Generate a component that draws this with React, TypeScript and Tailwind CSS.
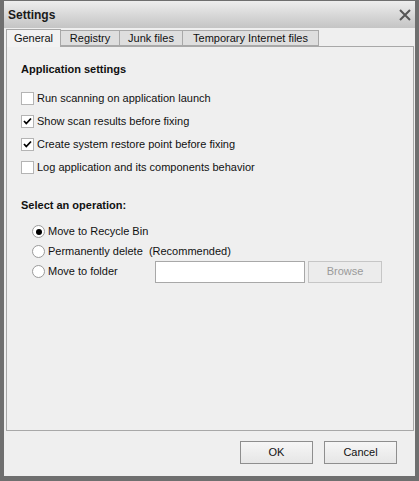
import React from "react";

const font = { fontFamily: '"Liberation Sans", Arial, sans-serif' };

function Check({ checked }: { checked?: boolean }) {
  return (
    <span className="w-[13px] h-[13px] border border-[#b4b4b4] bg-white flex items-center justify-center shrink-0">
      {checked && (
        <svg width="9" height="9" viewBox="0 0 9 9">
          <path d="M1 4 L3.3 6.5 L8 1.5" stroke="#000" strokeWidth="1.8" fill="none" />
        </svg>
      )}
    </span>
  );
}

function Radio({ checked }: { checked?: boolean }) {
  return (
    <span className="w-[13px] h-[13px] rounded-full border border-[#9a9a9a] bg-white flex items-center justify-center shrink-0">
      {checked && <span className="w-[6px] h-[6px] rounded-full bg-black" />}
    </span>
  );
}

export default function App() {
  return (
    <div
      className="w-[419px] h-[481px] bg-[#efefef] flex flex-col border-l-[4px] border-r-[4px] border-b-[5px] border-t border-[#6f6f6f] text-[11px] text-[#111]"
      style={font}
    >
      {/* Title bar */}
      <div className="h-[27px] flex items-center justify-between pl-[4px] pr-[3px] bg-gradient-to-b from-[#eeeeee] to-[#c4c4c4]">
        <span className="font-bold text-[12px] text-[#1a1a1a]">Settings</span>
        <svg width="14" height="14" viewBox="0 0 14 14">
          <path d="M2 2 L12 12 M12 2 L2 12" stroke="#555" strokeWidth="2" />
        </svg>
      </div>

      {/* Tabs */}
      <div className="flex items-end h-[18px] pl-[2px]">
        <div className="w-[55px] h-[18px] flex items-center justify-center bg-[#f2f2f2] border border-b-0 border-[#a8a8a8] relative z-10 -mb-px pb-px">
          General
        </div>
        <div className="w-[59px] h-[16px] flex items-center justify-center bg-[#dedede] border border-l-0 border-[#a8a8a8]">Registry</div>
        <div className="w-[63px] h-[16px] flex items-center justify-center bg-[#dedede] border border-l-0 border-[#a8a8a8]">Junk files</div>
        <div className="w-[136px] h-[16px] flex items-center justify-center bg-[#dedede] border border-l-0 border-[#a8a8a8]">Temporary Internet files</div>
      </div>

      {/* Panel */}
      <div className="ml-[2px] mr-[1px] h-[385px] border border-[#a8a8a8] bg-[#efefef] pl-[14px] pt-[15px]">
        <div className="font-bold h-[14px] leading-[14px]">Application settings</div>
        <div className="mt-[16px] flex flex-col gap-[10px]">
          {[
            ["Run scanning on application launch", false],
            ["Show scan results before fixing", true],
            ["Create system restore point before fixing", true],
            ["Log application and its components behavior", false],
          ].map(([t, c]) => (
            <div key={t as string} className="flex items-center gap-[3px] h-[13px]">
              <Check checked={c as boolean} />
              <span>{t as string}</span>
            </div>
          ))}
        </div>
        <div className="font-bold mt-[24px] h-[14px] leading-[14px]">Select an operation:</div>
        <div className="mt-[13px] ml-[11px] flex flex-col gap-[7px]">
          <div className="flex items-center gap-[3px] h-[13px]">
            <Radio checked />
            <span>Move to Recycle Bin</span>
          </div>
          <div className="flex items-center gap-[3px] h-[13px]">
            <Radio />
            <span>Permanently delete&nbsp; (Recommended)</span>
          </div>
          <div className="flex items-center h-[13px]">
            <Radio />
            <span className="ml-[3px] w-[107px]">Move to folder</span>
            <div className="w-[150px] h-[22px] bg-white border border-[#a8a8a8]" />
            <div className="ml-[3px] w-[74px] h-[22px] border border-[#c6c6c6] bg-[#ececec] flex items-center justify-center text-[#9a9a9a]">
              Browse
            </div>
          </div>
        </div>
      </div>

      {/* Buttons */}
      <div className="flex-1 flex justify-end items-start pt-[10px] pr-[18px] gap-[11px]">
        <button className="w-[73px] h-[23px] border border-[#8e8e8e] bg-gradient-to-b from-[#f6f6f6] to-[#e6e6e6] text-[11px]">OK</button>
        <button className="w-[73px] h-[23px] border border-[#8e8e8e] bg-gradient-to-b from-[#f6f6f6] to-[#e6e6e6] text-[11px]">Cancel</button>
      </div>
    </div>
  );
}
